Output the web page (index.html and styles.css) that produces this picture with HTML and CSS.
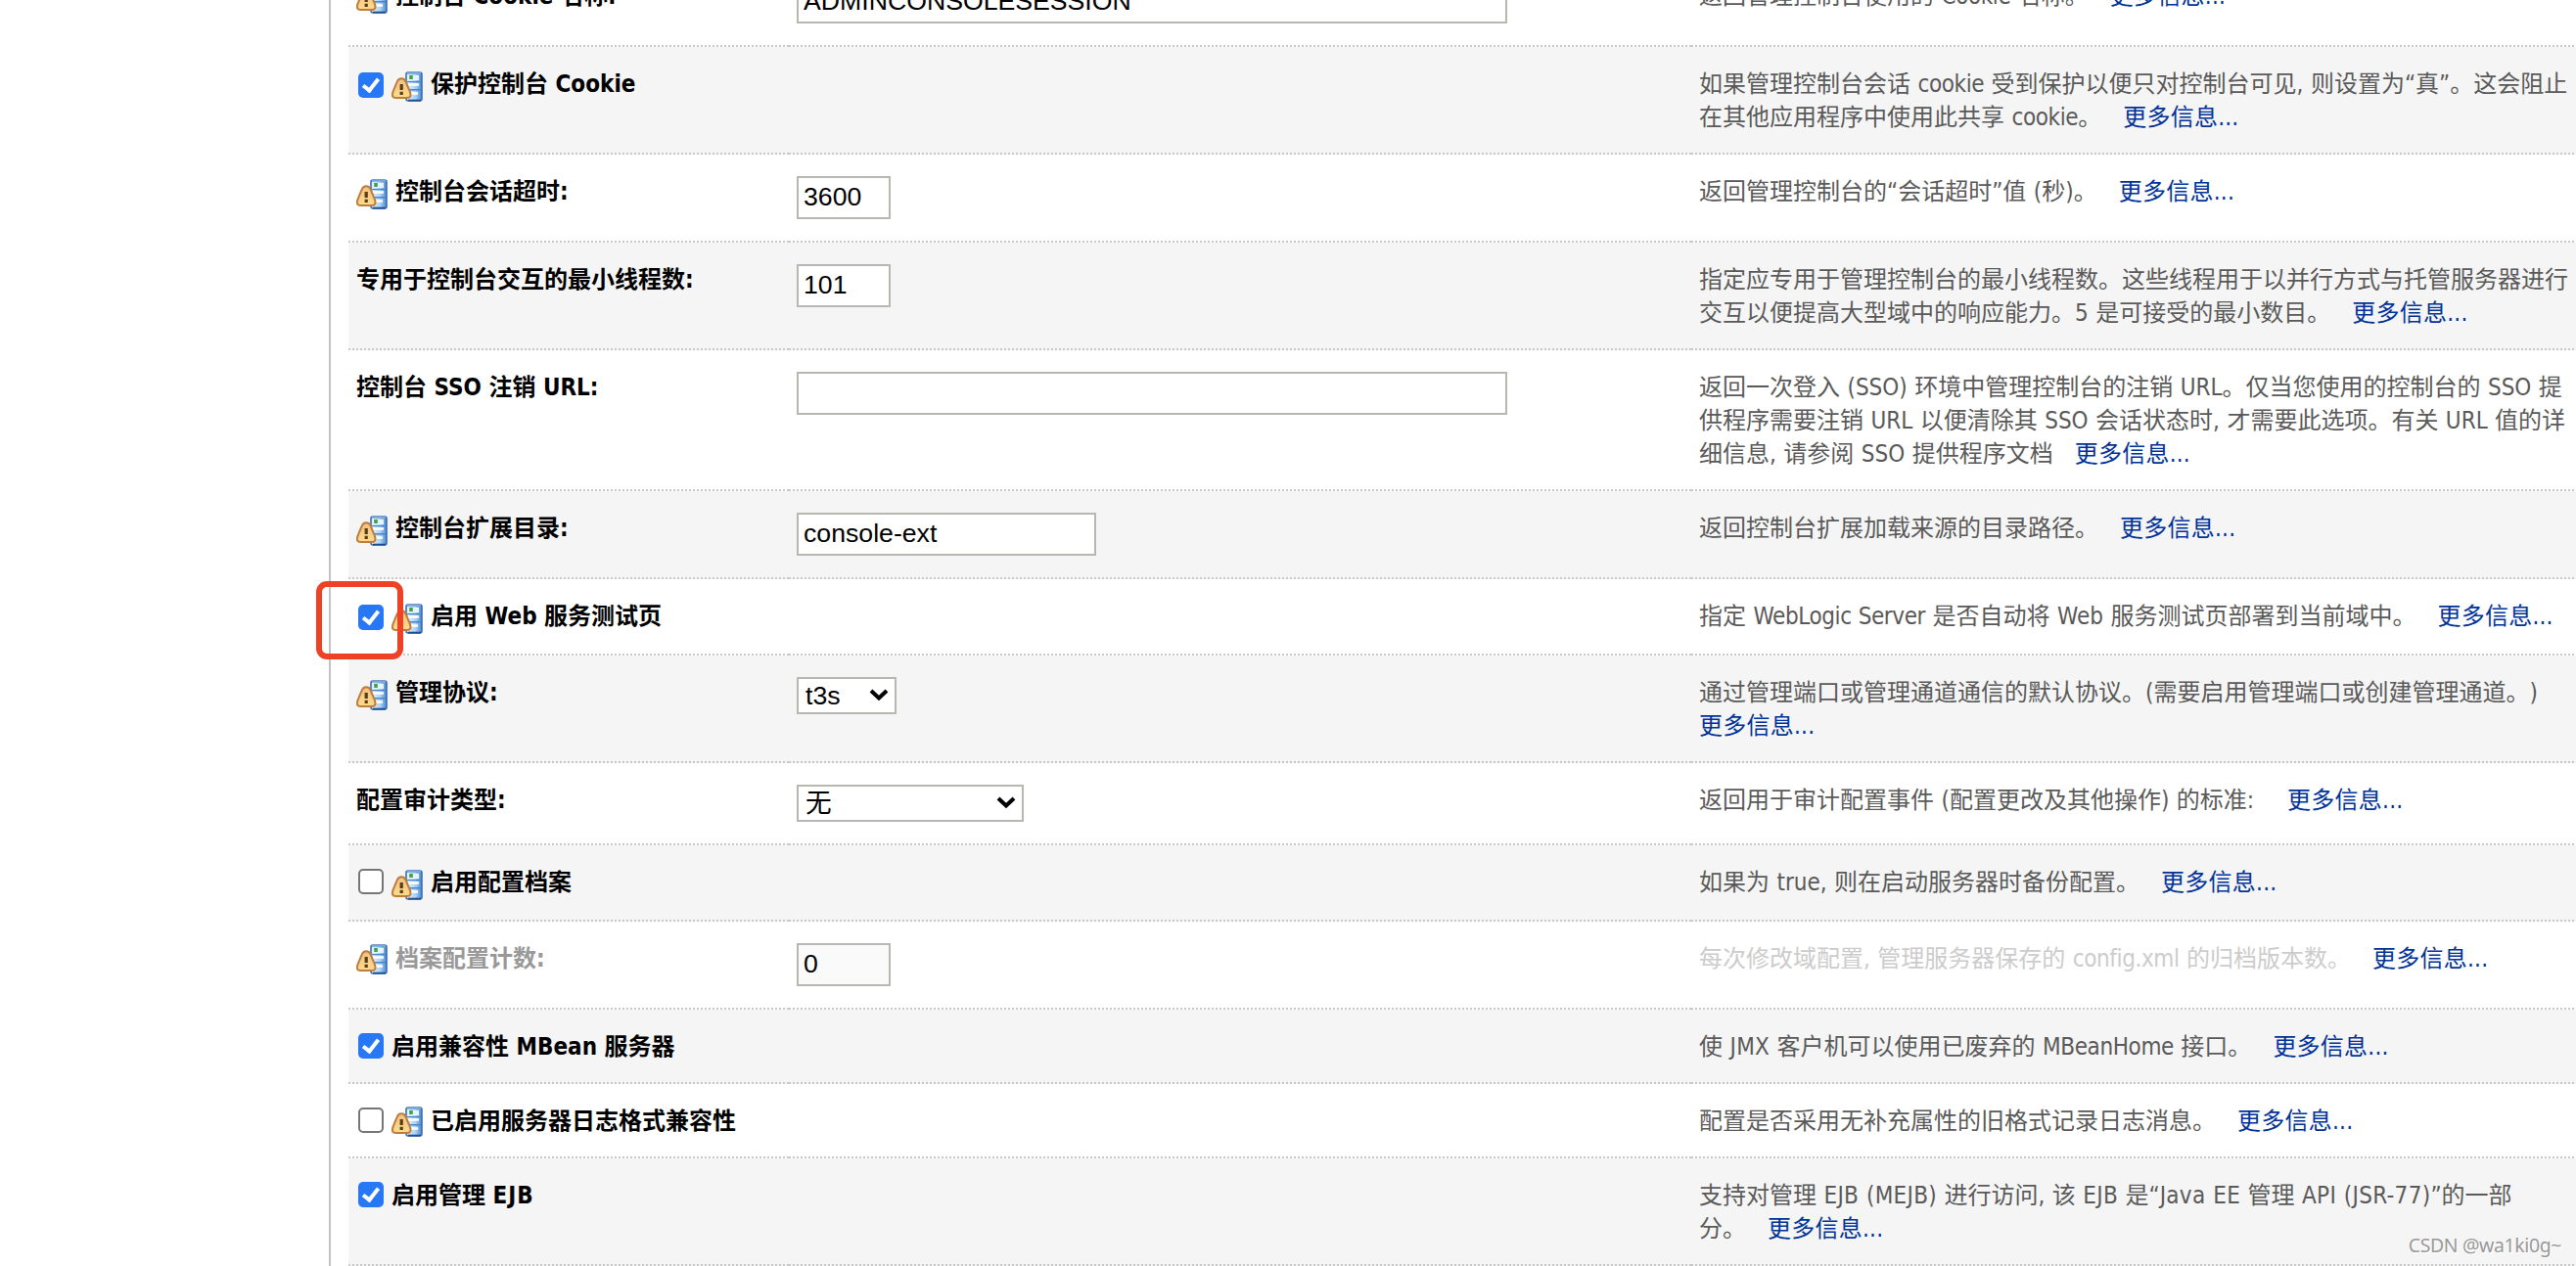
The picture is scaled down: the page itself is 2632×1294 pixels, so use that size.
FILE: index.html
```html
<!DOCTYPE html>
<html lang="zh-CN">
<head>
  <meta charset="UTF-8">
  <title>域配置</title>
  <link rel="stylesheet" href="styles.css">
</head>
<body>

<svg class="defs" width="0" height="0">
  <defs>
    <linearGradient id="blue" x1="0" x2="1" y1="0" y2="0">
      <stop offset="0" stop-color="#e8f6ff"/>
      <stop offset="0.6" stop-color="#a9d2f7"/>
      <stop offset="1" stop-color="#4a86cc"/>
    </linearGradient>
    <linearGradient id="amber" x1="0" x2="0" y1="0" y2="1">
      <stop offset="0" stop-color="#efc084"/>
      <stop offset="1" stop-color="#fddc8c"/>
    </linearGradient>
    <symbol id="restart" viewBox="0 0 32 32">
      <rect x="15" y="2" width="16" height="29" rx="2" fill="url(#blue)" stroke="#3a70b4" stroke-width="1.6"/>
      <path d="M16 2.6h14" stroke="#7ba6d8" stroke-width="2.4"/>
      <path d="M17 30.6h13" stroke="#1d4f92" stroke-width="1.8"/>
      <rect x="17" y="5" width="11" height="5" fill="#e6f4ff"/>
      <rect x="18.2" y="5" width="3.6" height="4" fill="#46a046"/>
      <path d="M16 11.6h14M16 19.8h14" stroke="#4a86cc" stroke-width="1.4"/>
      <path d="M17 14.5h11M18 23.5h9" stroke="#fff" stroke-width="2.6"/>
      <path d="M10.2 8.2c-2.6 0-3.8 1.4-4.6 3.6L1.6 21.6c-1.6 4.4-.4 6.4 2.8 6.4h11.6c3.2 0 4.4-2 2.8-6.4L14.8 11.8c-.8-2.2-2-3.6-4.6-3.6z" fill="url(#amber)" stroke="#c07c3c" stroke-width="2"/>
      <path d="M10.2 14v6M10.2 21.8v3.2" stroke="#5a3d14" stroke-width="3.2"/>
    </symbol>
    <symbol id="arrow" viewBox="0 0 20 12">
      <path d="M2 2l8 7.5L18 2" fill="none" stroke="#000" stroke-width="4"/>
    </symbol>
  </defs>
</svg>

<div class="panel">
  <table class="form">
    <colgroup><col class="c1"><col class="c2"><col class="c3"></colgroup>
    <tr>
      <td><label><svg class="icon"><use href="#restart"/></svg><span>控制台 Cookie 名称:</span></label></td>
      <td><input class="wide" type="text" value="ADMINCONSOLESESSION"></td>
      <td>返回管理控制台使用的 <i>Cookie</i> 名称。<a>更多信息...</a></td>
    </tr>
    <tr class="odd">
      <td><label><input type="checkbox" class="low" checked><svg class="icon"><use href="#restart"/></svg><span>保护控制台 Cookie</span></label></td>
      <td></td>
      <td>如果管理控制台会话 <i>cookie</i> 受到保护以便只对控制台可见, 则设置为“真”。这会阻止<br>在其他应用程序中使用此共享 <i>cookie</i>。<a>更多信息...</a></td>
    </tr>
    <tr>
      <td><label><svg class="icon"><use href="#restart"/></svg><span>控制台会话超时:</span></label></td>
      <td><input class="num" type="text" value="3600"></td>
      <td>返回管理控制台的“会话超时”值 (秒)。<a>更多信息...</a></td>
    </tr>
    <tr class="odd">
      <td><label><span>专用于控制台交互的最小线程数:</span></label></td>
      <td><input class="num" type="text" value="101"></td>
      <td>指定应专用于管理控制台的最小线程数。这些线程用于以并行方式与托管服务器进行<br>交互以便提高大型域中的响应能力。5 是可接受的最小数目。<a>更多信息...</a></td>
    </tr>
    <tr>
      <td><label><span>控制台 SSO 注销 URL:</span></label></td>
      <td><input class="wide" type="text" value=""></td>
      <td>返回一次登入 (SSO) 环境中管理控制台的注销 URL。仅当您使用的控制台的 SSO 提<br>供程序需要注销 URL 以便清除其 SSO 会话状态时, 才需要此选项。有关 URL 值的详<br>细信息, 请参阅 SSO 提供程序文档<a>更多信息...</a></td>
    </tr>
    <tr class="odd">
      <td><label><svg class="icon"><use href="#restart"/></svg><span>控制台扩展目录:</span></label></td>
      <td><input class="mid" type="text" value="console-ext"></td>
      <td>返回控制台扩展加载来源的目录路径。<a>更多信息...</a></td>
    </tr>
    <tr class="check">
      <td class="marked"><label><input type="checkbox" class="low" checked><svg class="icon"><use href="#restart"/></svg><span>启用 Web 服务测试页</span></label><div class="mark"></div></td>
      <td></td>
      <td>指定 <i>WebLogic Server</i> 是否自动将 Web 服务测试页部署到当前域中。<a>更多信息...</a></td>
    </tr>
    <tr class="odd">
      <td><label><svg class="icon"><use href="#restart"/></svg><span>管理协议:</span></label></td>
      <td><div class="select short"><select><option>t3s</option></select><svg><use href="#arrow"/></svg></div></td>
      <td>通过管理端口或管理通道通信的默认协议。(需要启用管理端口或创建管理通道。)<br><a class="first">更多信息...</a></td>
    </tr>
    <tr>
      <td><label><span>配置审计类型:</span></label></td>
      <td><div class="select"><select><option>无</option></select><svg><use href="#arrow"/></svg></div></td>
      <td>返回用于审计配置事件 (配置更改及其他操作) 的标准:<a class="after-colon">更多信息...</a></td>
    </tr>
    <tr class="odd check">
      <td><label><input type="checkbox"><svg class="icon"><use href="#restart"/></svg><span>启用配置档案</span></label></td>
      <td></td>
      <td>如果为 true, 则在启动服务器时备份配置。<a>更多信息...</a></td>
    </tr>
    <tr class="disabled">
      <td><label><svg class="icon up"><use href="#restart"/></svg><span>档案配置计数:</span></label></td>
      <td><input class="num" type="text" value="0" readonly></td>
      <td>每次修改域配置, 管理服务器保存的 <i>config.xml</i> 的归档版本数。<a>更多信息...</a></td>
    </tr>
    <tr class="odd">
      <td><label><input type="checkbox" checked><span>启用兼容性 MBean 服务器</span></label></td>
      <td></td>
      <td>使 <b>JMX</b> 客户机可以使用已废弃的 <i>MBeanHome</i> 接口。<a>更多信息...</a></td>
    </tr>
    <tr>
      <td><label><input type="checkbox"><svg class="icon up"><use href="#restart"/></svg><span>已启用服务器日志格式兼容性</span></label></td>
      <td></td>
      <td>配置是否采用无补充属性的旧格式记录日志消息。<a>更多信息...</a></td>
    </tr>
    <tr class="odd">
      <td><label><input type="checkbox" checked><span>启用管理 <b>EJB</b></span></label></td>
      <td></td>
      <td>支持对管理 <b>EJB (MEJB)</b> 进行访问, 该 <b>EJB</b> 是“<b>Java EE</b> 管理 <b>API (JSR-77)</b>”的一部<br>分。<a>更多信息...</a></td>
    </tr>
  </table>
</div>

<div class="watermark">CSDN @wa1ki0g~</div>

</body>
</html>
```

FILE: styles.css
```css
html, body {
  height: 100%;
  overflow: hidden;
}
body {
  margin: 0;
  background: #fff;
  font-family: "DejaVu Sans Condensed", "Noto Sans CJK SC", sans-serif;
  font-size: 24px;
  line-height: 34px;
  word-spacing: 0.6px;
  text-spacing-trim: space-all;
}
.defs {
  position: absolute;
}
.panel {
  display: flow-root;
  height: 1294px;
  margin-left: 336px;
  padding-left: 18px;
  border-left: 2px solid #c0c4c9;
  box-sizing: border-box;
}
.form {
  width: 2276px;
  margin-top: -42px;
  table-layout: fixed;
  border-collapse: separate;
  border-spacing: 0;
}
.c1 { width: 450px; }
.c2 { width: 922px; }
.c3 { width: 904px; }
td {
  height: 34px;
  padding: 20px 0 22px 8px;
  vertical-align: top;
  white-space: nowrap;
  color: #5a5a5a;
  /* square dots along the bottom edge of every cell */
  background: repeating-linear-gradient(90deg, #c9c9c9 0 2px, transparent 2px 4px) 0 100% / 100% 2px no-repeat;
}
.odd td {
  background-color: #f5f5f5;
}
.check td {
  height: 36px;
}
td:last-child {
  padding-top: 21px;
  padding-bottom: 21px;
}
td i {
  font-style: normal;
  letter-spacing: -0.4px;
}
td b {
  font-weight: inherit;
  letter-spacing: 0.3px;
}
label b {
  letter-spacing: 1px;
}
a {
  margin-left: 22px;
  color: #003399;
  letter-spacing: 0.25px;
}
a.first {
  margin-left: 0;
}
a.after-colon {
  margin-left: 34px;
}
label {
  display: flex;
  align-items: flex-start;
  height: 34px;
  color: #000;
  font-weight: bold;
  word-spacing: 0;
}
label span {
  margin-top: 1px;
}
.icon {
  flex: none;
  width: 32px;
  height: 32px;
  margin: 4px 8px 0 0;
}
.icon.up {
  margin-top: 2px;
}
input[type="checkbox"] {
  appearance: none;
  flex: none;
  width: 26px;
  height: 26px;
  margin: 4px 8px 0 2px;
  border: 2px solid #767676;
  border-radius: 5px;
  background: #fff;
}
input[type="checkbox"].low {
  margin-top: 6px;
}
input[type="checkbox"]:checked {
  border: 0;
  background: #2878f6;
}
input[type="checkbox"]:checked::before {
  content: "";
  display: block;
  width: 6px;
  height: 13px;
  margin: 3px 0 0 8px;
  border: solid #fff;
  border-width: 0 4px 4px 0;
  transform: rotate(38deg);
}
input[type="text"] {
  display: block;
  box-sizing: border-box;
  height: 44px;
  margin: 2px 0 0;
  padding: 0 4px 2px 5px;
  border: 2px solid #b7b8b1;
  background: #fff;
  color: #000;
  font: 26.67px "Liberation Sans", "Noto Sans CJK SC", sans-serif;
}
input[type="text"],
.select {
  margin-bottom: 2px;
}
.wide { width: 726px; }
.mid { width: 306px; }
.num { width: 96px; }
.select {
  position: relative;
  width: 232px;
  margin-top: 2px;
}
.select.short {
  width: 102px;
}
.select select {
  appearance: none;
  display: block;
  width: 100%;
  height: 38px;
  padding: 0 7px;
  border: 2px solid #b7b8b1;
  border-radius: 0;
  background: #fff;
  color: #000;
  font: 26.67px "Liberation Sans", "Noto Sans CJK SC", sans-serif;
}
.select svg {
  position: absolute;
  right: 8px;
  top: 12px;
  width: 20px;
  height: 12px;
}
.disabled td {
  color: #ccc;
}
.disabled label {
  color: #999;
}
.disabled input[type="text"] {
  background: #fafafa;
}
.marked {
  position: relative;
}
/* red frame around the checkbox */
.mark {
  position: absolute;
  left: -33px;
  top: 2px;
  width: 77px;
  height: 68px;
  border: 6px solid #ee4226;
  border-radius: 11px;
  z-index: 1;
}
.watermark {
  position: absolute;
  right: 15px;
  bottom: 4px;
  font-family: "Noto Sans", sans-serif;
  font-size: 19.5px;
  letter-spacing: -0.4px;
  word-spacing: 0;
  color: #999;
  text-shadow: 1px 1px 0 #fff;
}
```
